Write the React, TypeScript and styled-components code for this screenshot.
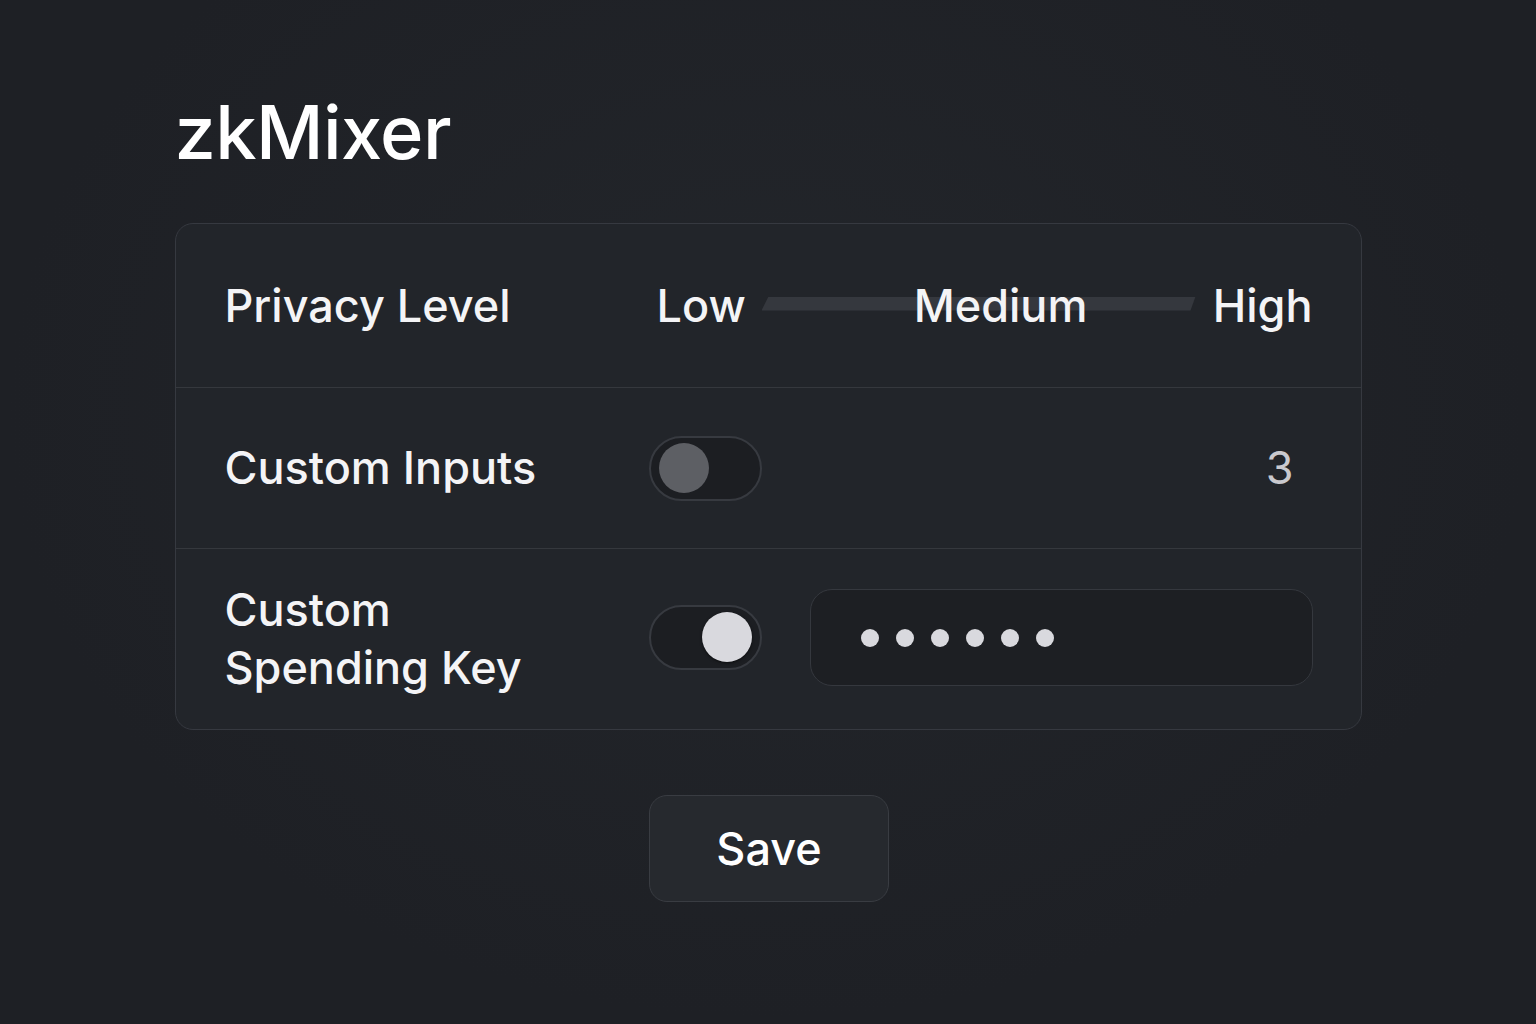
import styled, { createGlobalStyle } from "styled-components";

const GlobalStyle = createGlobalStyle`
  html, body {
    margin: 0;
    padding: 0;
    background: #1f2126;
  }
  body {
    font-family: Inter, "Noto Sans", "Liberation Sans", sans-serif;
    color: #f4f4f6;
  }
`;

const Page = styled.div`
  min-height: 1024px;
  background: radial-gradient(ellipse at 50% 40%, #23262b 0%, #1e2025 70%);
  display: flex;
  justify-content: center;
`;

const Column = styled.div`
  width: 1187px;
  padding-top: 95px;
  display: flex;
  flex-direction: column;
`;

const Title = styled.h1`
  margin: 0 0 54px 0;
  font-size: 74px;
  line-height: 74px;
  font-weight: 500;
  letter-spacing: -0.6px;
  color: #ffffff;
`;

const Card = styled.div`
  background: #22252a;
  border: 1.5px solid #363940;
  border-radius: 18px;
  overflow: hidden;
`;

const Row = styled.div<{ $height: number }>`
  display: grid;
  grid-template-columns: 424px 1fr;
  align-items: center;
  height: ${(p) => p.$height}px;
  padding: 0 48px 0 49px;
  & + & {
    border-top: 1.5px solid #35383d;
  }
`;

const Label = styled.div`
  font-size: 45px;
  line-height: 58px;
  font-weight: 450;
  color: #f4f4f6;
`;

const Slider = styled.div`
  position: relative;
  display: flex;
  align-items: center;
  padding-left: 8px;
`;

const Track = styled.div`
  position: absolute;
  left: 113px;
  right: 117px;
  top: 50%;
  height: 14px;
  margin-top: -9px;
  background: #35383e;
  clip-path: polygon(7px 0, 100% 0, calc(100% - 5px) 100%, 0 100%);
`;

const Stop = styled.span<{ $offset?: string }>`
  position: relative;
  margin-left: ${(p) => p.$offset ?? "0"};
  font-size: 45px;
  line-height: 58px;
  font-weight: 450;
  color: #f4f4f6;
`;

const Controls = styled.div`
  display: flex;
  align-items: center;
  justify-content: space-between;
  gap: 48px;
`;

const Toggle = styled.div<{ $on: boolean }>`
  flex: none;
  width: 113px;
  height: 65px;
  box-sizing: border-box;
  border-radius: 33px;
  border: 2px solid #373a40;
  background: #1c1e22;
  display: flex;
  align-items: center;
  justify-content: ${(p) => (p.$on ? "flex-end" : "flex-start")};
  padding: 0 8px;
  margin-top: ${(p) => (p.$on ? "-4px" : "0")};
`;

const Knob = styled.div<{ $on: boolean }>`
  width: 50px;
  height: 50px;
  border-radius: 50%;
  background: ${(p) => (p.$on ? "#d9d9de" : "#5d5f64")};
  box-shadow: ${(p) => (p.$on ? "0 1px 3px rgba(0,0,0,0.6)" : "none")};
`;

const Count = styled.span`
  font-size: 45px;
  line-height: 58px;
  color: #c9c9ce;
  padding-right: 19px;
`;

const KeyField = styled.div`
  flex: 1;
  height: 97px;
  box-sizing: border-box;
  border-radius: 22px;
  border: 1.5px solid #35383e;
  background: #1d1f23;
  display: flex;
  align-items: center;
  gap: 17px;
  padding-left: 50px;
  margin-top: -3px;
`;

const Dot = styled.span`
  width: 18px;
  height: 18px;
  border-radius: 50%;
  background: #d9d9de;
`;

const Footer = styled.div`
  display: flex;
  justify-content: center;
  margin-top: 65px;
`;

const SaveButton = styled.button`
  width: 240px;
  height: 107px;
  margin-left: 2px;
  border-radius: 18px;
  border: 1.5px solid #393c42;
  background: #26292e;
  color: #ffffff;
  font-family: inherit;
  font-size: 45px;
  font-weight: 450;
  cursor: pointer;
`;

export default function App() {
  return (
    <>
      <GlobalStyle />
      <Page>
        <Column>
          <Title>zkMixer</Title>
          <Card>
            <Row $height={163}>
              <Label>Privacy Level</Label>
              <Slider>
                <Track />
                <Stop>Low</Stop>
                <Stop $offset="168px">Medium</Stop>
                <Stop $offset="auto">High</Stop>
              </Slider>
            </Row>
            <Row $height={160}>
              <Label>Custom Inputs</Label>
              <Controls>
                <Toggle $on={false}>
                  <Knob $on={false} />
                </Toggle>
                <Count>3</Count>
              </Controls>
            </Row>
            <Row $height={180}>
              <Label>
                Custom
                <br />
                Spending Key
              </Label>
              <Controls>
                <Toggle $on={true}>
                  <Knob $on={true} />
                </Toggle>
                <KeyField>
                  {[0, 1, 2, 3, 4, 5].map((i) => (
                    <Dot key={i} />
                  ))}
                </KeyField>
              </Controls>
            </Row>
          </Card>
          <Footer>
            <SaveButton>Save</SaveButton>
          </Footer>
        </Column>
      </Page>
    </>
  );
}
